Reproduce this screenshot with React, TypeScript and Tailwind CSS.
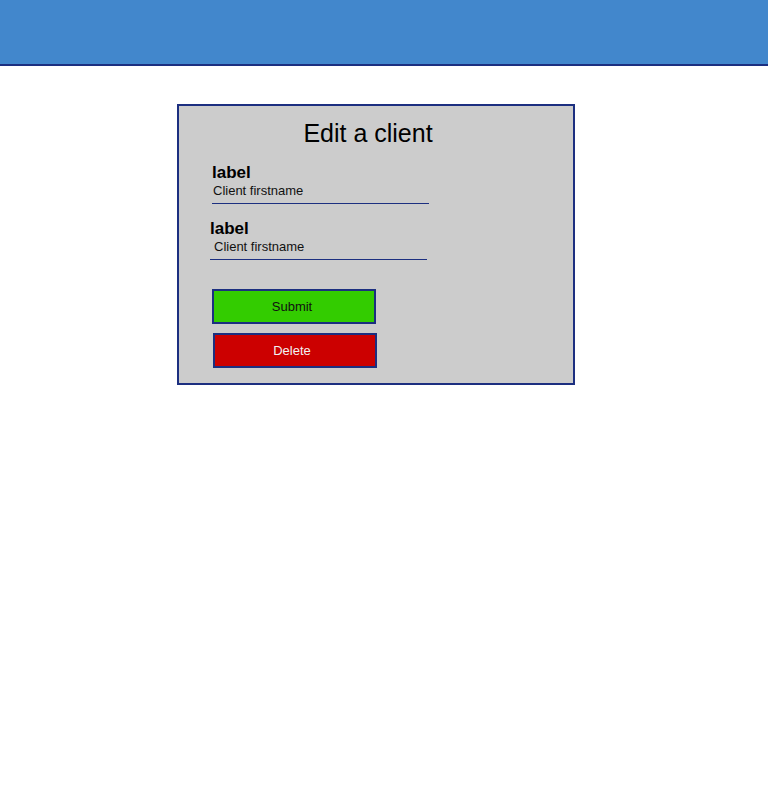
import React from "react";

const fields = [
  { id: 1, label: "label", value: "Client firstname", ml: "ml-[33px]", textMl: "ml-[1px]", mt: "mt-[15px]" },
  { id: 2, label: "label", value: "Client firstname", ml: "ml-[31px]", textMl: "ml-[4px]", mt: "mt-[15px]" },
];

export default function App() {
  return (
    <div className="min-h-screen bg-white font-['Liberation_Sans',Arial,sans-serif] text-black">
      {/* header */}
      <header className="h-[66px] bg-[#4287cc] border-b-2 border-[#1c2f80]" />

      {/* card */}
      <div className="ml-[177px] mt-[38px] w-[398px] border-2 border-[#1c2f80] bg-[#cccccc] pt-[13px] pb-[15px]">
        <h1 className="pr-[16px] text-center text-[25px] leading-[29px]">Edit a client</h1>

        {fields.map((f) => (
          <div key={f.id} className={`${f.mt} ${f.ml} w-[217px]`}>
            <label className="block text-[17px] font-bold leading-[20px]">{f.label}</label>
            <div className="border-b border-[#1c2f80] pb-[5px]">
              <div className={`${f.textMl} text-[13px] leading-[15px] text-[#111]`}>{f.value}</div>
            </div>
          </div>
        ))}

        <button className="mt-[29px] ml-[33px] flex h-[35px] w-[164px] items-center justify-center border-2 border-[#1c2f80] bg-[#33cc00] pr-[4px] text-[13px] text-[#111]">
          Submit
        </button>
        <button className="mt-[9px] ml-[34px] flex h-[35px] w-[164px] items-center justify-center border-2 border-[#1c2f80] bg-[#cc0000] pr-[6px] text-[13px] text-[#f2f2f2]">
          Delete
        </button>
      </div>
    </div>
  );
}
